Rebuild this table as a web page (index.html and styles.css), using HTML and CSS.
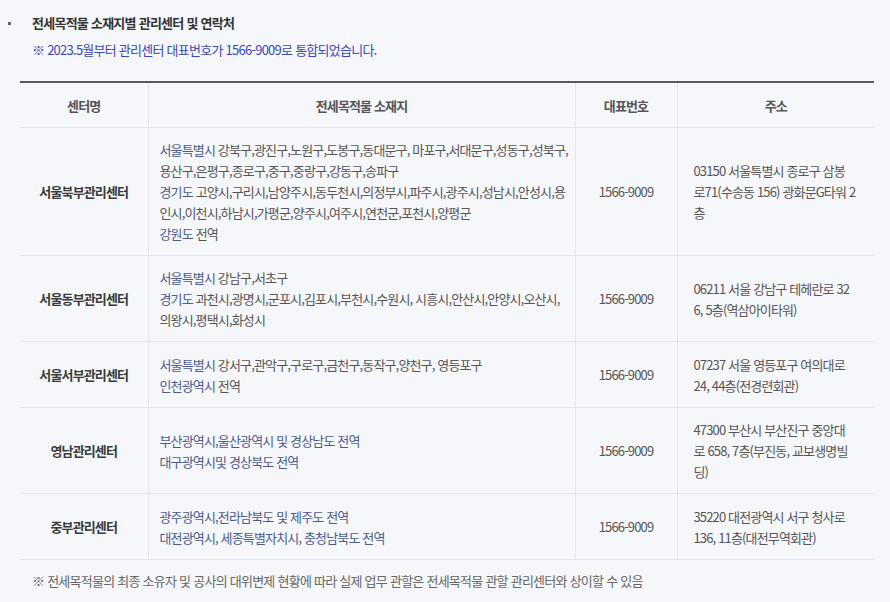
FILE: index.html
```html
<!DOCTYPE html>
<html lang="ko">
<head>
    <meta charset="UTF-8">
    <title>전세목적물 소재지별 관리센터 및 연락처</title>
    <link rel="stylesheet" href="styles.css">
</head>
<body>
    <div class="section">
        <h3 class="section-title">전세목적물 소재지별 관리센터 및 연락처</h3>
        <p class="notice">※ 2023.5월부터 관리센터 대표번호가 1566-9009로 통합되었습니다.</p>

        <table class="center-table">
            <colgroup>
                <col class="col-name">
                <col class="col-area">
                <col class="col-tel">
                <col class="col-addr">
            </colgroup>
            <thead>
                <tr>
                    <th>센터명</th>
                    <th>전세목적물 소재지</th>
                    <th>대표번호</th>
                    <th>주소</th>
                </tr>
            </thead>
            <tbody>
                <tr>
                    <td class="name">서울북부관리센터</td>
                    <td class="area">
                        <span class="region">서울특별시</span> 강북구,광진구,노원구,도봉구,동대문구, 마포구,서대문구,성동구,성북구,<br>
                        용산구,은평구,종로구,중구,중랑구,강동구,송파구<br>
                        <span class="region">경기도</span> 고양시,구리시,남양주시,동두천시,의정부시,파주시,광주시,성남시,안성시,용<br>
                        인시,이천시,하남시,가평군,양주시,여주시,연천군,포천시,양평군<br>
                        <span class="region">강원도</span> 전역
                    </td>
                    <td class="tel">1566-9009</td>
                    <td class="addr">03150 서울특별시 종로구 삼봉<br>로71(수송동 156) 광화문G타워 2<br>층</td>
                </tr>
                <tr>
                    <td class="name">서울동부관리센터</td>
                    <td class="area">
                        <span class="region">서울특별시</span> 강남구,서초구<br>
                        <span class="region">경기도</span> 과천시,광명시,군포시,김포시,부천시,수원시, 시흥시,안산시,안양시,오산시,<br>
                        의왕시,평택시,화성시
                    </td>
                    <td class="tel">1566-9009</td>
                    <td class="addr">06211 서울 강남구 테헤란로 32<br>6, 5층(역삼아이타워)</td>
                </tr>
                <tr>
                    <td class="name">서울서부관리센터</td>
                    <td class="area">
                        <span class="region">서울특별시</span> 강서구,관악구,구로구,금천구,동작구,양천구, 영등포구<br>
                        <span class="region">인천광역시</span> 전역
                    </td>
                    <td class="tel">1566-9009</td>
                    <td class="addr">07237 서울 영등포구 여의대로<br>24, 44층(전경련회관)</td>
                </tr>
                <tr>
                    <td class="name">영남관리센터</td>
                    <td class="area region-all">
                        부산광역시,울산광역시 및 경상남도 전역<br>
                        대구광역시및 경상북도 전역
                    </td>
                    <td class="tel">1566-9009</td>
                    <td class="addr">47300 부산시 부산진구 중앙대<br>로 658, 7층(부진동, 교보생명빌<br>딩)</td>
                </tr>
                <tr>
                    <td class="name">중부관리센터</td>
                    <td class="area region-all">
                        광주광역시,전라남북도 및 제주도 전역<br>
                        대전광역시, 세종특별자치시, 충청남북도 전역
                    </td>
                    <td class="tel">1566-9009</td>
                    <td class="addr">35220 대전광역시 서구 청사로<br>136, 11층(대전무역회관)</td>
                </tr>
            </tbody>
        </table>

        <p class="footnote">※ 전세목적물의 최종 소유자 및 공사의 대위변제 현황에 따라 실제 업무 관할은 전세목적물 관할 관리센터와 상이할 수 있음</p>
    </div>
</body>
</html>
```

FILE: styles.css
```css
body {
    margin: 0;
    padding: 0;
    background-color: #f5f7fa;
    font-family: "Noto Sans CJK KR", "Noto Sans", sans-serif;
    font-size: 13px;
    color: #555;
}
.section {
    padding: 12px 16px 0 8px;
}
.section-title {
    display: flex;
    align-items: center;
    margin: 0;
    font-size: 13px;
    line-height: 21px;
    font-weight: bold;
    color: #333;
    letter-spacing: -0.75px;
}
.section-title::before {
    content: "";
    flex: none;
    width: 3px;
    height: 3px;
    margin: 1px 21px 0 0;
    background-color: #666;
}
.notice {
    margin: 6px 0 0 24px;
    line-height: 21px;
    color: #3a48b8;
    letter-spacing: -0.75px;
}
.center-table {
    width: 854px;
    margin: 21px 0 0 12px;
    border-collapse: collapse;
    border-top: 2px solid #5d585b;
    table-layout: fixed;
    line-height: 21px;
    letter-spacing: -0.85px;
}
.col-name { width: 128px; }
.col-area { width: 427px; }
.col-tel { width: 102px; }
.col-addr { width: 197px; }
.center-table tbody tr {
    height: 66px;
}
.center-table th,
.center-table td {
    padding: 11px 0 11px 0;
    border-bottom: 1px solid #e3e6eb;
    border-left: 1px solid #e3e6eb;
    vertical-align: middle;
}
.center-table th:first-child,
.center-table td:first-child {
    border-left: none;
}
.center-table th {
    padding-top: 12px;
    font-weight: bold;
    color: #555;
    text-align: center;
}
.center-table td.name {
    text-align: center;
    font-weight: bold;
    color: #3a3a3a;
}
.center-table td.area {
    padding-left: 11px;
    white-space: nowrap;
}
.center-table td.tel {
    text-align: center;
}
.center-table td.addr {
    padding-left: 16px;
    white-space: nowrap;
}
.region,
.region-all {
    color: #4b5a90;
}
.footnote {
    margin: 10px 0 0 24px;
    line-height: 21px;
    color: #666;
    letter-spacing: -0.75px;
}
```
